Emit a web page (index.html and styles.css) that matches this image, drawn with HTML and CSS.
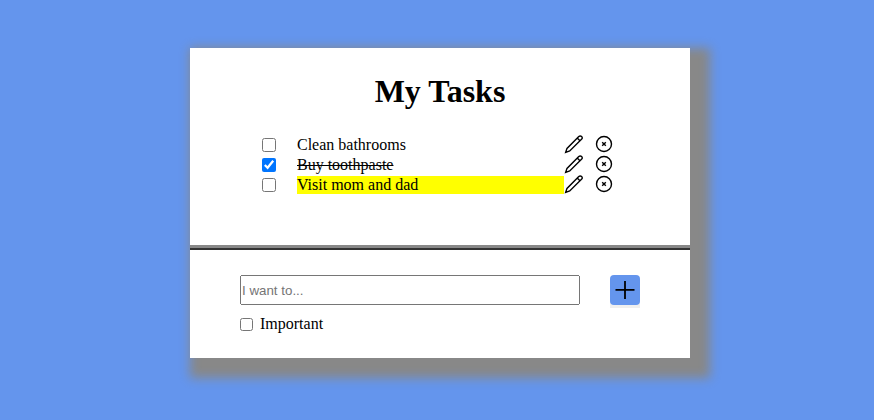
FILE: index.html
```html
<!DOCTYPE html>
<html lang="en">
<head>
<meta charset="utf-8">
<title>My Tasks</title>
<link rel="stylesheet" href="styles.css">
</head>
<body>
<svg class="defs" aria-hidden="true">
<symbol id="pen" viewBox="0 0 20 20"><path d="M1.7 18.3 3 14.4 14.8 2.6Q16.2 1.2 17.6 2.6T17.5 5.2L5.7 17ZM13.3 4.1 15.9 6.7"/></symbol>
<symbol id="remove" viewBox="0 0 20 20"><circle cx="10" cy="10" r="7.5"/><path d="m8.2 8.2 3.6 3.6m0-3.6-3.6 3.6"/></symbol>
</svg>
<main class="card">
<section class="tasks">
<h1>My Tasks</h1>
<ul class="list">
<li class="task"><input type="checkbox"><span class="name">Clean bathrooms</span><svg class="icon"><use href="#pen"/></svg><svg class="icon remove"><use href="#remove"/></svg></li>
<li class="task"><input type="checkbox" checked><span class="name done">Buy toothpaste</span><svg class="icon"><use href="#pen"/></svg><svg class="icon remove"><use href="#remove"/></svg></li>
<li class="task"><input type="checkbox"><span class="name important">Visit mom and dad</span><svg class="icon"><use href="#pen"/></svg><svg class="icon remove"><use href="#remove"/></svg></li>
</ul>
</section>
<form class="entry">
<div class="row"><input class="text" type="text" placeholder="I want to..."><button class="add" type="button" aria-label="Add"><svg viewBox="0 0 30 30"><path d="M15 6v18M5.5 14.8h19"/></svg></button></div>
<label class="flag"><input type="checkbox"><span>Important</span></label>
</form>
</main>
</body>
</html>
```
FILE: styles.css
```css
* { box-sizing: border-box; }
body { margin: 0; padding-top: 48px; height: 420px; overflow: hidden; background: cornflowerblue; font: 16px "Liberation Serif", serif; color: #000; }
.defs { display: none; }
.card { width: 500px; height: 310px; margin: 0 auto 0 190px; background: #fff; box-shadow: 10px 10px 10px 10px #888; }
.tasks { height: 202px; padding-top: 25px; border-bottom: 2px solid #333; box-shadow: inset 0 -3px #888; }
h1 { margin: 0; font-size: 32px; line-height: 37px; text-align: center; }
.list { list-style: none; margin: 24px 0 0; padding: 0 0 0 72px; }
.task { display: flex; align-items: center; height: 20px; }
.task input { width: 14px; height: 14px; margin: 2px 21px 0 0; }
.name { width: 267px; line-height: 18px; margin-top: 1px; }
.done { text-decoration: line-through; }
.important { background: yellow; }
.icon { width: 20px; height: 20px; fill: none; stroke: #000; stroke-width: 1.4; }
.remove { margin-left: 10px; }
.entry { padding: 25px 50px 0; }
.row { display: flex; justify-content: space-between; height: 30px; }
.text { width: 340px; height: 30px; padding: 1px 0; font: 13.333px "Liberation Sans", sans-serif; }
.add { width: 30px; height: 33px; padding: 0 0 3px; border: 0; background: linear-gradient(#fff 15px, #efefef 15px); }
.add svg { display: block; width: 30px; height: 30px; border-radius: 4px; background: cornflowerblue; fill: none; stroke: #000; stroke-width: 1.8; }
.flag { display: flex; align-items: center; margin-top: 10px; line-height: 18px; }
.flag input { width: 13px; height: 13px; margin: 0 7px 0 0; }
```
